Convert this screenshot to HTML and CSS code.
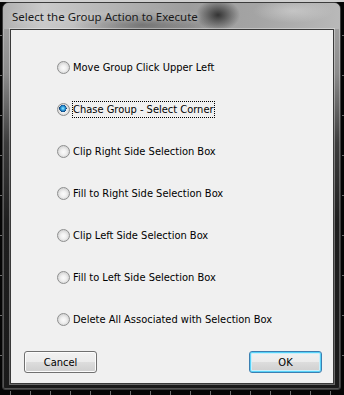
FILE: index.html
```html
<!DOCTYPE html>
<html lang="en">
<head>
  <meta charset="UTF-8">
  <title>Select the Group Action to Execute</title>
  <link rel="stylesheet" href="styles.css">
</head>
<body>
  <div class="window">
    <div class="titlebar">
      <span class="title">Select the Group Action to Execute</span>
    </div>

    <div class="frame">
      <div class="client">
        <form class="options" id="action-form">
          <label class="option"><input type="radio" name="action" value="move"><span>Move Group Click Upper Left</span></label>
          <label class="option"><input type="radio" name="action" value="chase" checked><span class="focused">Chase Group - Select Corner</span></label>
          <label class="option"><input type="radio" name="action" value="clip-right"><span>Clip Right Side Selection Box</span></label>
          <label class="option"><input type="radio" name="action" value="fill-right"><span>Fill to Right Side Selection Box</span></label>
          <label class="option"><input type="radio" name="action" value="clip-left"><span>Clip Left Side Selection Box</span></label>
          <label class="option"><input type="radio" name="action" value="fill-left"><span>Fill to Left Side Selection Box</span></label>
          <label class="option"><input type="radio" name="action" value="delete"><span>Delete All Associated with Selection Box</span></label>
        </form>

        <div class="buttons">
          <button type="button" class="btn">Cancel</button>
          <button type="submit" form="action-form" class="btn default">OK</button>
        </div>
      </div>
    </div>
  </div>
</body>
</html>
```

FILE: styles.css
```css
html, body {
  height: 100%;
}

body {
  margin: 0;
  overflow: hidden;
  font-family: "DejaVu Sans Condensed", "DejaVu Sans", sans-serif;
  font-stretch: condensed;
  font-size: 11px;
  color: #000;
  /* tick marks of the canvas behind the dialog */
  background:
    repeating-linear-gradient(90deg, transparent 0 10px, #6e6e6e 10px 11px, transparent 11px 20px) left bottom / 100% 4px no-repeat,
    repeating-linear-gradient(180deg, transparent 0 35px, #6e6e6e 35px 36px, transparent 36px 40px) left top / 2px 100% no-repeat,
    repeating-linear-gradient(180deg, transparent 0 35px, #6e6e6e 35px 36px, transparent 36px 40px) right top / 2px 100% no-repeat,
    linear-gradient(180deg, #cfcfcf 0 2px, #050505 2px);
}

.window {
  box-sizing: border-box;
  width: 339px;
  height: 388px;
  margin: 2px 0 0 2px;
  border: 1px solid #3c3c3c;
  border-radius: 7px 7px 3px 3px;
  overflow: hidden;
  display: flex;
  flex-direction: column;
  background: linear-gradient(180deg, #a9a9a9 0, #8c8c8c 70px, #3c3c3c 140px, #1e1e1e 220px, #1a1a1a 100%);
  box-shadow: inset 0 0 0 1px rgba(255, 255, 255, 0.25);
}

/* blurred glass behind the caption */
.titlebar {
  height: 26px;
  padding-left: 9px;
  display: flex;
  align-items: center;
  background:
    radial-gradient(ellipse 22px 16px at 215px 12px, rgba(40, 40, 40, 0.9), transparent),
    radial-gradient(ellipse 70px 14px at 140px 22px, rgba(70, 70, 70, 0.55), transparent),
    radial-gradient(ellipse 40px 12px at 290px 8px, rgba(220, 220, 220, 0.5), transparent),
    linear-gradient(90deg, #b0b0b0 0, #cacaca 12%, #b2b2b2 35%, #9d9d9d 55%, #a4a4a4 75%, #b9b9b9 100%);
}

.title {
  font-family: "Noto Sans", "Open Sans", sans-serif;
  font-stretch: normal;
  font-size: 11.5px;
  color: #1a1a1a;
  text-shadow: 0 0 6px rgba(255, 255, 255, 0.6);
}

.frame {
  flex: 1;
  padding: 0 6px 5px 7px;
}

.client {
  box-sizing: border-box;
  height: 100%;
  padding: 16px 11px 10px 13px;
  background-color: #f0f0f0;
  border: 1px solid #3a3a3a;
  box-shadow: 0 0 0 1px rgba(255, 255, 255, 0.35);
  display: flex;
  flex-direction: column;
}

.options {
  margin: 0;
  padding-left: 33px;
}

.option {
  height: 42px;
  display: flex;
  align-items: center;
}

.option input {
  -webkit-appearance: none;
  appearance: none;
  box-sizing: border-box;
  width: 13px;
  height: 13px;
  margin: 0 3px 0 0;
  border: 1px solid #8e8f8f;
  border-radius: 50%;
  background: radial-gradient(circle at 50% 55%, #fbfbfb 0, #f0f0f0 35%, #d6d6d6 70%, #e6e6e6 100%);
}

.option input:checked {
  background:
    radial-gradient(circle at 45% 40%, #9fe6fc 0, #3fb2ea 1.5px, #1668ae 3px, #0e3c6e 3.6px, transparent 3.7px),
    radial-gradient(circle at 50% 55%, #fbfbfb 0, #f0f0f0 35%, #d6d6d6 70%, #e6e6e6 100%);
}

.option span {
  padding: 1px 0;
}

.focused {
  outline: 1px dotted #000;
}

.buttons {
  margin-top: auto;
  display: flex;
  justify-content: space-between;
}

.btn {
  box-sizing: border-box;
  width: 73px;
  height: 22px;
  padding: 0;
  font-family: inherit;
  font-stretch: inherit;
  font-size: 11px;
  color: #000;
  border: 1px solid #707070;
  border-radius: 3px;
  background: linear-gradient(180deg, #f2f2f2 0, #ebebeb 50%, #dddddd 50%, #cfcfcf 100%);
  box-shadow: inset 0 0 0 1px #fcfcfc;
}

.btn.default {
  border-color: #3c7fb1;
  box-shadow: inset 0 0 0 1px #57d2f8, inset 0 0 0 2px #c9effb;
}
```
